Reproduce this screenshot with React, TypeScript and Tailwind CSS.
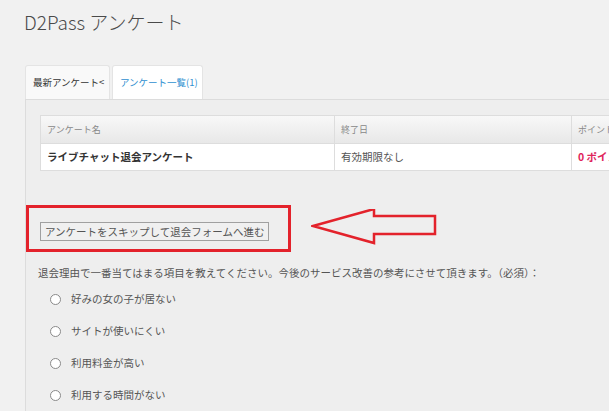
const font = {
  fontFamily: '"Noto Sans CJK JP", "Noto Sans", sans-serif',
}

const reasons = [
  "好みの女の子が居ない",
  "サイトが使いにくい",
  "利用料金が高い",
  "利用する時間がない",
]

function Arrow() {
  return (
    <svg width="128" height="40" viewBox="0 0 128 40" className="shrink-0">
      <polygon
        points="2,17 63,0 63,7 124,7 124,25 63,25 63,34"
        fill="none"
        stroke="#e3222b"
        strokeWidth="2.5"
      />
    </svg>
  )
}

export default function App() {
  return (
    <div
      className="w-[609px] h-[411px] overflow-hidden bg-[#f1f1f1] text-[#555]"
      style={font}
    >
      {/* Title */}
      <h1 className="pl-[24px] pt-[8px] text-[19px] leading-[28px] text-[#4a4a4a] font-light">
        D2Pass アンケート
      </h1>

      {/* Tabs */}
      <div className="mt-[29px] ml-[25px] flex gap-[2px]">
        <div className="h-[34px] w-[85px] flex items-center px-[7px] bg-[#f9f9f9] border border-b-0 border-[#e4e4e4] rounded-t-[3px] text-[9.5px] text-[#333] whitespace-nowrap">
          最新アンケート&lt;
        </div>
        <div className="h-[34px] w-[91px] flex items-center px-[7px] bg-white border border-b-0 border-[#e4e4e4] rounded-t-[3px] text-[9.5px] text-[#2f8fd0] whitespace-nowrap">
          アンケート一覧(1)
        </div>
      </div>

      {/* Panel */}
      <div className="ml-[25px] w-[700px] border-l border-t border-[#dcdcdc] bg-[#eeeeee] pt-[15px] pb-[20px]">
        <div className="ml-[14px] w-[640px] border border-[#dddddd] bg-white">
          <div className="flex h-[28px] bg-gradient-to-b from-[#f8f8f8] to-[#e8e8e8] border-b border-[#dddddd] text-[9px] text-[#888]">
            <div className="w-[294px] px-[6px] flex items-center border-r border-[#dddddd]">アンケート名</div>
            <div className="w-[237px] px-[6px] flex items-center border-r border-[#dddddd]">終了日</div>
            <div className="flex-1 px-[6px] flex items-center">ポイント</div>
          </div>
          <div className="flex h-[26px] text-[10.5px]">
            <div className="w-[294px] px-[6px] flex items-center border-r border-[#dddddd] font-bold text-[#333]">
              ライブチャット退会アンケート
            </div>
            <div className="w-[237px] px-[6px] flex items-center border-r border-[#dddddd] text-[#555]">
              有効期限なし
            </div>
            <div className="flex-1 px-[6px] flex items-center font-bold text-[#e0245a]">0 ポイント</div>
          </div>
        </div>

        {/* Skip button with annotation */}
        <div className="mt-[34px] flex items-center gap-[20px]">
          <div className="w-[265px] h-[47px] border-[3px] border-[#e3222b] pl-[11px] pt-[9px]">
            <button className="h-[19px] px-[4px] border border-[#a0a0a0] bg-[#f0f0f0] text-[10.5px] leading-[17px] text-[#555] whitespace-nowrap">
              アンケートをスキップして退会フォームへ進む
            </button>
          </div>
          <Arrow />
        </div>

        {/* Question */}
        <p className="mt-[13px] ml-[12px] text-[10.5px] leading-[16px] text-[#555] whitespace-nowrap">
          退会理由で一番当てはまる項目を教えてください。今後のサービス改善の参考にさせて頂きます。（必須）：
        </p>
        <div className="mt-[2px] ml-[24px] flex flex-col">
          {reasons.map((r) => (
            <label key={r} className="h-[32px] flex items-center gap-[10px] text-[10.5px] text-[#555]">
              <span className="w-[11px] h-[11px] rounded-full border border-[#8a8a8a] bg-white" />
              {r}
            </label>
          ))}
        </div>
      </div>
    </div>
  )
}
